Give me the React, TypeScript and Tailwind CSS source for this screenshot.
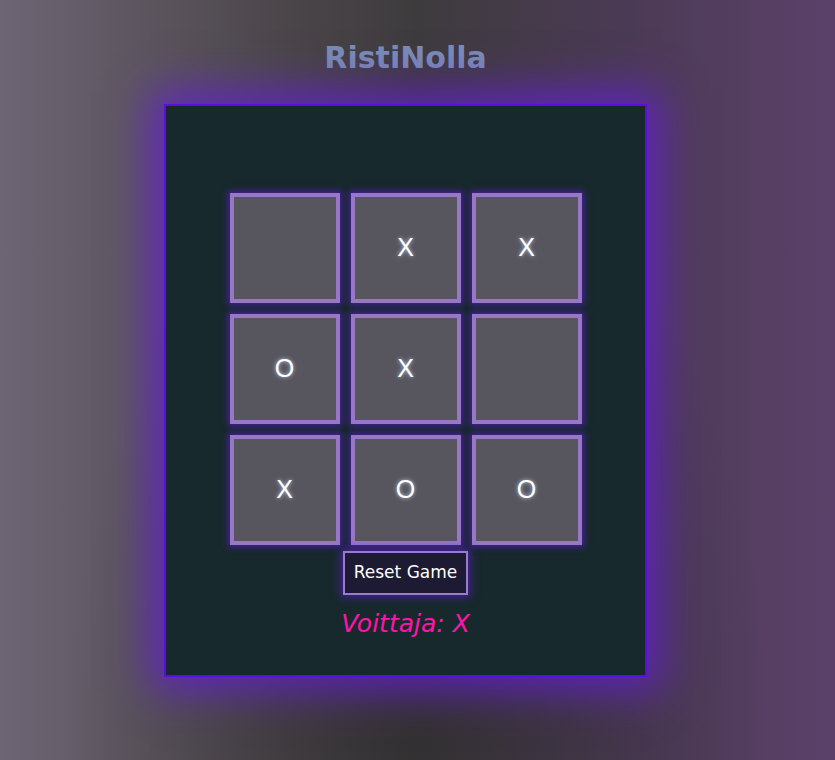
const board = ["", "X", "X", "O", "X", "", "X", "O", "O"];

export default function App() {
  return (
    <div className="relative min-h-screen w-full overflow-hidden bg-[linear-gradient(to_right,#6e6574,#4a4549_35%,#3e3b3d_50%,#4b3a55_75%,#5b4169)] font-['Comic_Sans_MS','DejaVu_Sans',sans-serif]">
      <div className="pointer-events-none absolute inset-0 bg-[radial-gradient(ellipse_at_50%_100%,rgba(40,38,40,0.5),transparent_60%)]" />
      <div className="relative flex flex-col items-center pr-[24px]">
        <h1 className="mt-[39px] h-[38px] text-[30px] font-bold leading-[38px] text-[#7a8cb6]">
          RistiNolla
        </h1>
        <div className="mt-[27px] flex h-[573px] w-[483px] flex-col items-center border-2 border-[#5a0fe0] bg-[#18292d] pt-[87px] shadow-[0_0_40px_14px_rgba(100,30,210,0.8)]">
          <div className="grid grid-cols-[110px_110px_110px] gap-[11px]">
            {board.map((v, i) => (
              <div
                key={i}
                className="flex h-[110px] items-center justify-center border-4 border-[#9777c6] bg-[#57555e] font-['Liberation_Sans',sans-serif] text-[25px] text-white shadow-[0_0_6px_2px_rgba(90,30,200,0.7)] [text-shadow:0_0_4px_rgba(200,220,255,0.9)]"
              >
                {v}
              </div>
            ))}
          </div>
          <button className="mt-[6px] h-[44px] w-[125px] border-2 border-[#9a7ad0] bg-[#1d1a33] text-[17px] font-medium text-white shadow-[0_0_8px_2px_rgba(90,30,200,0.7)]">
            Reset Game
          </button>
          <p className="mt-[12px] text-[25px] italic leading-[34px] text-[#ff14aa]">Voittaja: X</p>
        </div>
      </div>
    </div>
  );
}
